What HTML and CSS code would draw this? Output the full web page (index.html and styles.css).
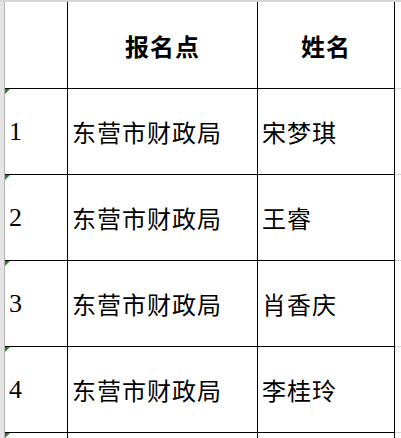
FILE: index.html
```html
<!DOCTYPE html>
<html lang="zh-CN">
<head>
<meta charset="utf-8">
<title>报名名单</title>
<link rel="stylesheet" href="styles.css">
</head>
<body>
<div class="sheet">
  <div class="band"></div><div class="band"></div><div class="band"></div><div class="band"></div><div class="band"></div>

  <div class="gutter"></div>
  <div class="cell c1"></div>
  <div class="cell head">报名点</div>
  <div class="cell head">姓名</div>
  <div class="extra"></div>

  <div class="gutter"></div>
  <div class="cell c1 num">1</div>
  <div class="cell">东营市财政局</div>
  <div class="cell">宋梦琪</div>
  <div class="extra"></div>

  <div class="gutter"></div>
  <div class="cell c1 num">2</div>
  <div class="cell">东营市财政局</div>
  <div class="cell">王睿</div>
  <div class="extra"></div>

  <div class="gutter"></div>
  <div class="cell c1 num">3</div>
  <div class="cell">东营市财政局</div>
  <div class="cell">肖香庆</div>
  <div class="extra"></div>

  <div class="gutter"></div>
  <div class="cell c1 num">4</div>
  <div class="cell">东营市财政局</div>
  <div class="cell">李桂玲</div>
  <div class="extra"></div>

  <div class="gutter"></div>
  <div class="cell c1 num"></div>
  <div class="cell"></div>
  <div class="cell"></div>
  <div class="extra"></div>
</div>
</body>
</html>
```

FILE: styles.css
```css
html, body {
  margin: 0;
  padding: 0;
  background: #ffffff;
}

body {
  width: 401px;
  height: 438px;
  overflow: hidden;
  font-family: "Noto Sans CJK SC", "Noto Sans", sans-serif;
  color: #000000;
}

.sheet {
  display: grid;
  grid-template-columns: 5px 63px 190px 137px 6px;
  grid-template-rows: 2px 87px 86px 86px 86px 86px 20px;
}

.band {
  background: #d4d4d4;
}

.gutter {
  background: #e4e4e4;
  border-right: 1px solid #b4b4b4;
}

.cell {
  position: relative;
  border-right: 1px solid #000000;
  border-bottom: 1px solid #000000;
  display: flex;
  align-items: center;
  padding-left: 4px;
  font-size: 24px;
  letter-spacing: 1px;
  white-space: nowrap;
  overflow: hidden;
}

.head {
  justify-content: center;
  padding-left: 0;
  font-weight: 700;
}

.num {
  font-family: "Liberation Serif", "Times New Roman", serif;
  font-size: 26px;
  letter-spacing: 0;
}

.num::before {
  content: "";
  position: absolute;
  top: 0;
  left: 0;
  border-top: 5px solid #1e8a1e;
  border-right: 5px solid transparent;
}

.extra {
  border-bottom: 1px solid #d4d4d4;
}
```
